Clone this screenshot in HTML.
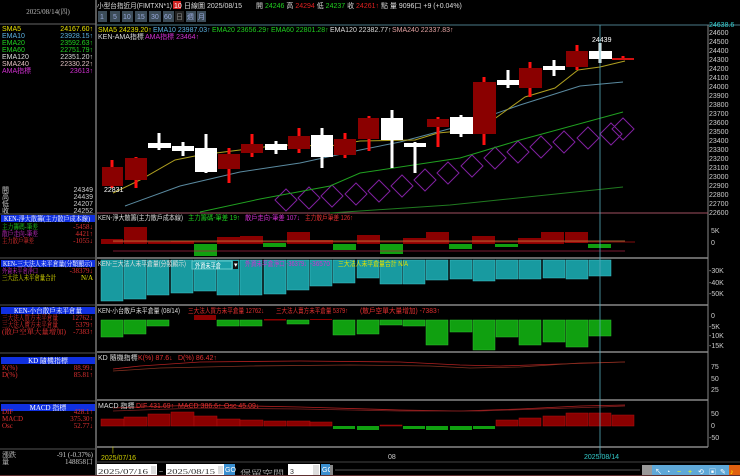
<!DOCTYPE html>
<html><head><meta charset="utf-8"><style>
html,body{margin:0;padding:0;background:#000;width:740px;height:476px;overflow:hidden}
svg{display:block}
text{font-family:"Liberation Sans","Noto Sans CJK TC",sans-serif;font-size:7px}
.s{font-family:"Liberation Serif","Noto Serif CJK SC",serif}
</style></head><body>
<svg width="740" height="476" viewBox="0 0 740 476" xmlns="http://www.w3.org/2000/svg">
<rect width="740" height="476" fill="#000"/>
<!-- left panel -->
<text x="48" y="14" fill="#bbb" text-anchor="middle" class="s" font-size="6">2025/08/14(四)</text>
<line x1="0" y1="24" x2="96" y2="24" stroke="#666"/>
<line x1="96" y1="0" x2="96" y2="476" stroke="#777" stroke-width="1.5"/>
<g class="s" font-size="6">
<text x="2" y="31" fill="#e8e000" font-size="6">SMA5</text><text x="93" y="31" fill="#e8e000" text-anchor="end" font-size="6">24167.60↑</text>
<text x="2" y="38" fill="#5ab0e0" font-size="6">EMA10</text><text x="93" y="38" fill="#5ab0e0" text-anchor="end" font-size="6">23928.15↑</text>
<text x="2" y="45" fill="#20d020" font-size="6">EMA20</text><text x="93" y="45" fill="#20d020" text-anchor="end" font-size="6">23592.63↑</text>
<text x="2" y="52" fill="#20d020" font-size="6">EMA60</text><text x="93" y="52" fill="#20d020" text-anchor="end" font-size="6">22751.79↑</text>
<text x="2" y="59" fill="#ddd" font-size="6">EMA120</text><text x="93" y="59" fill="#ddd" text-anchor="end" font-size="6">22351.20↑</text>
<text x="2" y="66" fill="#e0c0c0" font-size="6">SMA240</text><text x="93" y="66" fill="#e0c0c0" text-anchor="end" font-size="6">22330.22↑</text>
<text x="2" y="73" fill="#d030d0" font-size="6">AMA指標</text><text x="93" y="73" fill="#d030d0" text-anchor="end" font-size="6">23613↑</text>
<text x="2" y="192" fill="#ccc" font-size="6">開</text><text x="93" y="192" fill="#ccc" text-anchor="end" font-size="6">24349</text>
<text x="2" y="199" fill="#ccc" font-size="6">高</text><text x="93" y="199" fill="#ccc" text-anchor="end" font-size="6">24439</text>
<text x="2" y="206" fill="#ccc" font-size="6">低</text><text x="93" y="206" fill="#ccc" text-anchor="end" font-size="6">24207</text>
<text x="2" y="213" fill="#ccc" font-size="6">收</text><text x="93" y="213" fill="#ccc" text-anchor="end" font-size="6">24252</text>
</g>
<line x1="0" y1="214" x2="96" y2="214" stroke="#555"/>
<rect x="1" y="215" width="94" height="7" fill="#1030e0"/>
<text x="4" y="221" fill="#fff" class="s" font-size="6" textLength="86" lengthAdjust="spacingAndGlyphs">KEN-淨大散籌(主力散戶成本線)</text>
<text x="2" y="229" fill="#20d020" class="s" font-size="6" textLength="36" lengthAdjust="spacingAndGlyphs">主力籌碼-筆差</text><text x="93" y="229" fill="#e03030" text-anchor="end" class="s" font-size="6">-5458↓</text>
<text x="2" y="236" fill="#d030d0" class="s" font-size="6" textLength="36" lengthAdjust="spacingAndGlyphs">散戶走向-筆差</text><text x="93" y="236" fill="#e03030" text-anchor="end" class="s" font-size="6">4421↑</text>
<text x="2" y="243" fill="#e03030" class="s" font-size="6" textLength="32" lengthAdjust="spacingAndGlyphs">主力散戶筆差</text><text x="93" y="243" fill="#e03030" text-anchor="end" class="s" font-size="6">-1055↓</text>
<line x1="0" y1="258" x2="96" y2="258" stroke="#555"/>
<rect x="1" y="260" width="94" height="7" fill="#1030e0"/>
<text x="3" y="266" fill="#fff" class="s" font-size="6" textLength="89" lengthAdjust="spacingAndGlyphs">KEN-三大法人未平倉量(分類顯示)</text>
<text x="2" y="273" fill="#d030d0" class="s" font-size="6" textLength="36" lengthAdjust="spacingAndGlyphs">外資未平倉淨口</text><text x="93" y="273" fill="#e03030" text-anchor="end" class="s" font-size="6">-38379↓</text>
<text x="2" y="280" fill="#e0e000" class="s" font-size="6" textLength="54" lengthAdjust="spacingAndGlyphs">三大法人未平倉量合計</text><text x="93" y="280" fill="#e0e000" text-anchor="end" class="s" font-size="6">N/A</text>
<line x1="0" y1="305" x2="96" y2="305" stroke="#555"/>
<rect x="1" y="307" width="94" height="7" fill="#1030e0"/>
<text x="14" y="313" fill="#fff" class="s" font-size="6" textLength="68" lengthAdjust="spacingAndGlyphs">KEN-小台散戶未平倉量</text>
<text x="2" y="320" fill="#e03030" class="s" font-size="6" textLength="56" lengthAdjust="spacingAndGlyphs">三大法人買方未平倉量</text><text x="93" y="320" fill="#e03030" text-anchor="end" class="s" font-size="6">12762↓</text>
<text x="2" y="327" fill="#e03030" class="s" font-size="6" textLength="56" lengthAdjust="spacingAndGlyphs">三大法人賣方未平倉量</text><text x="93" y="327" fill="#e03030" text-anchor="end" class="s" font-size="6">5379↑</text>
<text x="2" y="334" fill="#e03030" class="s" font-size="6" textLength="64" lengthAdjust="spacingAndGlyphs">(散戶空單大量增加)</text><text x="93" y="334" fill="#e03030" text-anchor="end" class="s" font-size="6">-7383↑</text>
<line x1="0" y1="353" x2="96" y2="353" stroke="#555"/>
<rect x="1" y="357" width="94" height="7" fill="#1030e0"/>
<text x="48" y="363" fill="#fff" text-anchor="middle" class="s" font-size="6">KD 隨機指標</text>
<text x="2" y="370" fill="#e03030" class="s" font-size="6">K(%)</text><text x="93" y="370" fill="#e03030" text-anchor="end" class="s" font-size="6">88.99↓</text>
<text x="2" y="377" fill="#e03030" class="s" font-size="6">D(%)</text><text x="93" y="377" fill="#e03030" text-anchor="end" class="s" font-size="6">85.81↑</text>
<line x1="0" y1="401" x2="96" y2="401" stroke="#555"/>
<rect x="1" y="404" width="94" height="7" fill="#1030e0"/>
<text x="48" y="410" fill="#fff" text-anchor="middle" class="s" font-size="6">MACD 指標</text>
<text x="2" y="414" fill="#e03030" class="s" font-size="6">DIF</text><text x="93" y="414" fill="#e03030" text-anchor="end" class="s" font-size="6">428.1↑</text>
<text x="2" y="421" fill="#e03030" class="s" font-size="6">MACD</text><text x="93" y="421" fill="#e03030" text-anchor="end" class="s" font-size="6">375.30↑</text>
<text x="2" y="428" fill="#e03030" class="s" font-size="6">Osc</text><text x="93" y="428" fill="#e03030" text-anchor="end" class="s" font-size="6">52.77↓</text>
<line x1="0" y1="449" x2="96" y2="449" stroke="#555"/>
<text x="2" y="457" fill="#ccc" class="s" font-size="6">漲跌</text><text x="93" y="457" fill="#ccc" text-anchor="end" class="s" font-size="6">-91 (-0.37%)</text>
<text x="2" y="464" fill="#ccc" class="s" font-size="6">量</text><text x="93" y="464" fill="#ccc" text-anchor="end" class="s" font-size="6">148858口</text>

<!-- header -->
<text x="97" y="8" fill="#ddd" font-size="8" textLength="75" lengthAdjust="spacingAndGlyphs">小型台指近月(FIMTXN*1)</text>
<rect x="173" y="1" width="8" height="8" fill="#d02020"/><text x="174" y="8" fill="#fff" font-size="6">10</text>
<text x="184" y="8" fill="#ddd" font-size="8">日線圖  2025/08/15</text>
<text x="256" y="8" fill="#ddd" font-size="8">開 <tspan fill="#20d020">24246</tspan> 高 <tspan fill="#e02020">24294</tspan> 低 <tspan fill="#20d020">24237</tspan> 收 <tspan fill="#e02020">24261↑</tspan> 點 量 9096口  +9 (+0.04%)</text>
<g font-size="7">
<rect x="98" y="11" width="9" height="11" fill="#3c4c58"/><text x="100" y="19" fill="#9ad">1</text>
<rect x="110" y="11" width="10" height="11" fill="#3c4c58"/><text x="113" y="19" fill="#9ad">5</text>
<rect x="122" y="11" width="11" height="11" fill="#3c4c58"/><text x="123" y="19" fill="#9ad">10</text>
<rect x="135" y="11" width="12" height="11" fill="#3c4c58"/><text x="137" y="19" fill="#9ad">15</text>
<rect x="149" y="11" width="12" height="11" fill="#3c4c58"/><text x="151" y="19" fill="#9ad">30</text>
<rect x="163" y="11" width="11" height="11" fill="#3c4c58"/><text x="164" y="19" fill="#9ad">60</text>
<rect x="175" y="11" width="9" height="11" fill="#222"/><text x="176" y="19" fill="#888">日</text>
<rect x="186" y="11" width="10" height="11" fill="#3c4c58"/><text x="187" y="19" fill="#9ad">週</text>
<rect x="197" y="11" width="9" height="11" fill="#3c4c58"/><text x="198" y="19" fill="#9ad">月</text>
</g>
<line x1="97" y1="25" x2="740" y2="25" stroke="#4a7a88"/>
<text x="98" y="32" fill="#e0e000">SMA5 24239.20↑</text>
<text x="153" y="32" fill="#5ab0e0">EMA10 23987.03↑</text>
<text x="212" y="32" fill="#20d020">EMA20 23656.29↑</text>
<text x="271" y="32" fill="#20d020">EMA60 22801.28↑</text>
<text x="330" y="32" fill="#ddd">EMA120 22382.77↑</text>
<text x="392" y="32" fill="#e0a0a0">SMA240 22337.83↑</text>
<text x="98" y="39" fill="#ddd">KEN-AMA指標</text>
<text x="145" y="39" fill="#d030d0">AMA指標 23464↑</text>

<!-- right axis -->
<line x1="708" y1="25" x2="708" y2="447" stroke="#888"/>
<g fill="#ccc" font-size="6">
<text x="709" y="27" fill="#3cc">24638.6</text>
<text x="709" y="35">24600</text><text x="709" y="44">24500</text><text x="709" y="53">24400</text><text x="709" y="62">24300</text><text x="709" y="71">24200</text><text x="709" y="80">24100</text><text x="709" y="89">24000</text><text x="709" y="98">23900</text><text x="709" y="107">23800</text><text x="709" y="116">23700</text><text x="709" y="125">23600</text><text x="709" y="134">23500</text><text x="709" y="143">23400</text><text x="709" y="152">23300</text><text x="709" y="161">23200</text><text x="709" y="170">23100</text><text x="709" y="179">23000</text><text x="709" y="188">22900</text><text x="709" y="197">22800</text><text x="709" y="206">22700</text><text x="709" y="215">22600</text>
<text x="711" y="233">5K</text><text x="711" y="245">0</text>
<text x="709" y="273">-30K</text><text x="709" y="285">-40K</text><text x="709" y="296">-50K</text>
<text x="711" y="318">0</text><text x="709" y="329">-5K</text><text x="709" y="338">-10K</text><text x="709" y="348">-15K</text>
<text x="711" y="369">75</text><text x="711" y="381">50</text><text x="711" y="392">25</text>
<text x="711" y="416">50</text><text x="711" y="428">0</text><text x="709" y="440">-50</text>
</g>
<!-- panel separators -->
<g stroke="#888" stroke-width="1.5">
<line x1="97" y1="213" x2="708" y2="213" stroke="#a05060" stroke-width="1"/>
<line x1="97" y1="258" x2="708" y2="258"/>
<line x1="97" y1="305" x2="708" y2="305"/>
<line x1="97" y1="352" x2="708" y2="352"/>
<line x1="97" y1="400" x2="708" y2="400"/>
<line x1="97" y1="447" x2="708" y2="447"/>
</g>

<!-- diamonds -->
<g fill="none" stroke="#8020a0" stroke-width="1">
<path d="M275 200 l11 -11 l11 11 l-11 11z M298 198 l11 -11 l11 11 l-11 11z M321 196 l11 -11 l11 11 l-11 11z M345 194 l11 -11 l11 11 l-11 11z M368 191 l11 -11 l11 11 l-11 11z M391 186 l11 -11 l11 11 l-11 11z M414 180 l11 -11 l11 11 l-11 11z M437 173 l11 -11 l11 11 l-11 11z M461 166 l11 -11 l11 11 l-11 11z M484 158 l11 -11 l11 11 l-11 11z M507 152 l11 -11 l11 11 l-11 11z M530 147 l11 -11 l11 11 l-11 11z M553 142 l11 -11 l11 11 l-11 11z M577 138 l11 -11 l11 11 l-11 11z M600 134 l11 -11 l11 11 l-11 11z M612 129 l11 -11 l11 11 l-11 11z"/>
</g>
<!-- MA lines -->
<polyline fill="none" stroke="#207a20" points="330,213 450,205 623,187"/>
<polyline fill="none" stroke="#20a020" points="200,212 260,199 330,186 360,173 460,158 520,140 623,112"/>
<polyline fill="none" stroke="#5a8aa0" points="125,206 180,186 240,172 300,163 360,150 400,142 460,126 520,105 580,86 623,82"/>
<polyline fill="none" stroke="#b0a020" points="113,193 140,180 175,160 200,155 240,150 280,145 330,146 360,141 415,140 438,133 470,130 490,122 525,97 555,88 578,70 600,67 625,61"/>

<!-- candles -->
<g stroke="#ff1010" stroke-width="3">
<line x1="112" y1="160" x2="112" y2="188"/><line x1="136" y1="157" x2="136" y2="188"/>
<line x1="229" y1="148" x2="229" y2="183"/><line x1="252" y1="134" x2="252" y2="157"/>
<line x1="299" y1="128" x2="299" y2="153"/><line x1="345" y1="133" x2="345" y2="158"/>
<line x1="369" y1="116" x2="369" y2="151"/><line x1="438" y1="117" x2="438" y2="147"/>
<line x1="484" y1="77" x2="484" y2="145"/><line x1="530" y1="62" x2="530" y2="97"/>
<line x1="577" y1="45" x2="577" y2="70"/><line x1="623" y1="56" x2="623" y2="60"/>
</g>
<g fill="#8a0000">
<rect x="102" y="167" width="21" height="19"/><rect x="125" y="158" width="22" height="22"/>
<rect x="218" y="154" width="22" height="15"/><rect x="241" y="144" width="22" height="9"/>
<rect x="288" y="136" width="22" height="13"/><rect x="334" y="139" width="22" height="16"/>
<rect x="358" y="118" width="21" height="21"/><rect x="427" y="119" width="22" height="8"/>
<rect x="473" y="82" width="23" height="52"/><rect x="519" y="68" width="23" height="20"/>
<rect x="566" y="51" width="22" height="16"/><rect x="612" y="58" width="22" height="2" fill="#d01010"/>
</g>
<g stroke="#fff" stroke-width="3">
<line x1="159" y1="133" x2="159" y2="150"/><line x1="183" y1="142" x2="183" y2="156"/>
<line x1="206" y1="134" x2="206" y2="173"/><line x1="276" y1="141" x2="276" y2="154"/>
<line x1="322" y1="128" x2="322" y2="168"/><line x1="392" y1="110" x2="392" y2="168"/>
<line x1="415" y1="142" x2="415" y2="173"/><line x1="461" y1="115" x2="461" y2="137"/>
<line x1="508" y1="70" x2="508" y2="88"/><line x1="554" y1="60" x2="554" y2="76"/>
<line x1="600" y1="43" x2="600" y2="63"/>
</g>
<g fill="#fff">
<rect x="148" y="143" width="23" height="5"/><rect x="172" y="146" width="22" height="5"/>
<rect x="195" y="148" width="22" height="24"/><rect x="265" y="144" width="22" height="6"/>
<rect x="311" y="135" width="22" height="22"/><rect x="381" y="118" width="22" height="22"/>
<rect x="404" y="143" width="22" height="4"/><rect x="450" y="117" width="23" height="17"/>
<rect x="497" y="80" width="22" height="5"/><rect x="543" y="66" width="22" height="4"/>
<rect x="589" y="51" width="23" height="8"/>
</g>
<text x="104" y="192" fill="#fff" font-size="7">22831</text>
<text x="592" y="42" fill="#fff" font-size="7">24439</text>

<!-- panel 2 -->
<g fill="#8a0000">
<rect x="101" y="239" width="22" height="5"/><rect x="124" y="227" width="23" height="17"/>
<rect x="148" y="242" width="23" height="2"/><rect x="171" y="241" width="23" height="3"/>
<rect x="217" y="237" width="23" height="7"/><rect x="240" y="236" width="23" height="8"/>
<rect x="287" y="232" width="23" height="12"/><rect x="310" y="240" width="23" height="4"/>
<rect x="357" y="235" width="23" height="9"/><rect x="403" y="238" width="23" height="6"/>
<rect x="426" y="232" width="23" height="12"/><rect x="472" y="236" width="23" height="8"/>
<rect x="518" y="238" width="23" height="6"/><rect x="541" y="232" width="23" height="12"/>
<rect x="565" y="232" width="23" height="11"/>
</g>
<g fill="#10a010">
<rect x="194" y="244" width="23" height="12"/><rect x="263" y="243" width="23" height="4"/>
<rect x="333" y="244" width="23" height="6"/><rect x="380" y="244" width="23" height="10"/>
<rect x="449" y="244" width="23" height="5"/><rect x="495" y="244" width="23" height="3"/>
<rect x="588" y="244" width="23" height="4"/>
</g>
<line x1="113" y1="241" x2="625" y2="241" stroke="#c08040" stroke-width="0.7"/>
<line x1="113" y1="242" x2="635" y2="242" stroke="#b01010" stroke-width="0.8"/>
<line x1="113" y1="251" x2="625" y2="251" stroke="#a02040" stroke-width="0.8"/>
<text x="98" y="220" fill="#ddd" textLength="85" lengthAdjust="spacingAndGlyphs">KEN-淨大散籌(主力散戶成本線)</text>
<text x="188" y="220" fill="#20d020" textLength="52" lengthAdjust="spacingAndGlyphs">主力籌碼-筆差 19↑</text>
<text x="245" y="220" fill="#d030d0" textLength="55" lengthAdjust="spacingAndGlyphs">散戶走向-筆差 107↓</text>
<text x="305" y="220" fill="#e03030" textLength="48" lengthAdjust="spacingAndGlyphs">主力散戶筆差 126↑</text>

<!-- panel 3 teal -->
<g fill="#189aa0" stroke="#40c0c8" stroke-width="0.5">
<rect x="101" y="260" width="22" height="41"/><rect x="124" y="260" width="22" height="39"/>
<rect x="147" y="260" width="22" height="35"/><rect x="171" y="260" width="22" height="33"/>
<rect x="194" y="260" width="22" height="31"/><rect x="217" y="260" width="22" height="35"/>
<rect x="240" y="260" width="22" height="35"/><rect x="264" y="260" width="22" height="34"/>
<rect x="287" y="260" width="22" height="30"/><rect x="310" y="260" width="22" height="26"/>
<rect x="333" y="260" width="22" height="23"/><rect x="357" y="260" width="22" height="18"/>
<rect x="380" y="260" width="22" height="24"/><rect x="403" y="260" width="22" height="24"/>
<rect x="426" y="260" width="22" height="20"/><rect x="450" y="260" width="22" height="19"/>
<rect x="473" y="260" width="22" height="21"/><rect x="496" y="260" width="22" height="19"/>
<rect x="519" y="260" width="22" height="19"/><rect x="543" y="260" width="22" height="18"/>
<rect x="566" y="260" width="22" height="19"/><rect x="589" y="260" width="22" height="16"/>
</g>
<text x="98" y="266" fill="#ddd" textLength="88" lengthAdjust="spacingAndGlyphs">KEN-三大法人未平倉量(分類顯示)</text>
<rect x="192" y="261" width="40" height="8" fill="#1aa0a8" stroke="#6cc"/>
<text x="195" y="268" fill="#fff" textLength="26" lengthAdjust="spacingAndGlyphs">外資未平倉</text>
<rect x="233" y="261" width="5" height="8" fill="#111"/><text x="234" y="267" fill="#fff" font-size="5">▾</text>
<text x="245" y="266" fill="#d030d0" textLength="62" lengthAdjust="spacingAndGlyphs">外資未平倉淨口 -36379↓</text>
<text x="310" y="266" fill="#d030d0" textLength="20" lengthAdjust="spacingAndGlyphs">-36570</text>
<text x="338" y="266" fill="#e0e000" textLength="70" lengthAdjust="spacingAndGlyphs">三大法人未平倉量合計 N/A</text>

<!-- panel 4 green -->
<g fill="#10a010" stroke="#30c030" stroke-width="0.5">
<rect x="101" y="320" width="22" height="17"/><rect x="124" y="320" width="22" height="14"/>
<rect x="147" y="320" width="22" height="6"/><rect x="217" y="320" width="22" height="6"/>
<rect x="240" y="320" width="22" height="6"/><rect x="287" y="320" width="22" height="4"/>
<rect x="333" y="320" width="22" height="15"/><rect x="357" y="320" width="22" height="14"/>
<rect x="380" y="320" width="22" height="5"/><rect x="403" y="320" width="22" height="6"/>
<rect x="426" y="320" width="22" height="25"/><rect x="450" y="320" width="22" height="12"/>
<rect x="473" y="320" width="22" height="30"/><rect x="496" y="320" width="22" height="17"/>
<rect x="519" y="320" width="22" height="25"/><rect x="543" y="320" width="22" height="22"/>
<rect x="566" y="320" width="22" height="27"/><rect x="589" y="320" width="22" height="16"/>
</g>
<rect x="194" y="315" width="22" height="5" fill="#8a0000"/>
<rect x="264" y="319" width="22" height="1.5" fill="#8a0000"/>
<rect x="310" y="319" width="22" height="1" fill="#8a0000"/>
<text x="98" y="313" fill="#ddd" textLength="82" lengthAdjust="spacingAndGlyphs">KEN-小台散戶未平倉量 (08/14)</text>
<text x="188" y="313" fill="#e03030" textLength="76" lengthAdjust="spacingAndGlyphs">三大法人買方未平倉量 12762↓</text>
<text x="276" y="313" fill="#e03030" textLength="72" lengthAdjust="spacingAndGlyphs">三大法人賣方未平倉量 5379↑</text>
<text x="360" y="313" fill="#e03030" textLength="80" lengthAdjust="spacingAndGlyphs">(散戶空單大量增加) -7383↑</text>

<!-- KD -->
<polyline fill="none" stroke="#b02020" stroke-width="0.8" points="113,369 140,366 200,362 300,361 400,362 460,365 500,366 560,364 625,362"/>
<polyline fill="none" stroke="#803020" stroke-width="0.8" points="113,371 160,368 250,366 350,365 430,366 470,368 520,367 580,363 625,362"/>
<text x="98" y="360" fill="#ddd">KD 隨機指標</text>
<text x="138" y="360" fill="#e03030">K(%) 87.6↓</text>
<text x="178" y="360" fill="#e03030">D(%) 86.42↑</text>

<!-- MACD -->
<g fill="#8a0000" stroke="#b01010" stroke-width="0.5">
<rect x="101" y="419" width="23" height="7"/><rect x="124" y="417" width="23" height="9"/>
<rect x="148" y="414" width="22" height="12"/><rect x="171" y="412" width="23" height="14"/>
<rect x="194" y="416" width="23" height="10"/><rect x="217" y="419" width="23" height="7"/>
<rect x="240" y="420" width="23" height="6"/><rect x="264" y="421" width="22" height="5"/>
<rect x="287" y="421" width="23" height="5"/><rect x="310" y="422" width="22" height="4"/>
<rect x="380" y="425" width="22" height="1"/><rect x="496" y="420" width="22" height="6"/>
<rect x="519" y="418" width="22" height="8"/><rect x="543" y="416" width="22" height="10"/>
<rect x="566" y="413" width="22" height="13"/><rect x="589" y="413" width="22" height="13"/>
<rect x="612" y="415" width="22" height="11"/>
</g>
<g fill="#10a010">
<rect x="333" y="426" width="22" height="3"/><rect x="357" y="426" width="22" height="4"/>
<rect x="403" y="426" width="22" height="3"/><rect x="426" y="426" width="22" height="4"/>
<rect x="450" y="426" width="22" height="4"/><rect x="473" y="426" width="22" height="3"/>
</g>
<polyline fill="none" stroke="#b02020" stroke-width="0.8" points="113,408 200,405 300,407 400,410 460,411 520,409 580,406 625,405"/>
<polyline fill="none" stroke="#802020" stroke-width="0.8" points="113,411 200,408 300,409 400,411 480,411 540,409 600,407 625,406"/>
<text x="98" y="408" fill="#ddd">MACD 指標</text>
<text x="136" y="408" fill="#e03030">DIF 431.69↑</text>
<text x="178" y="408" fill="#e03030">MACD 386.6↑</text>
<text x="224" y="408" fill="#e03030">Osc 45.09↓</text>

<!-- crosshair -->
<line x1="600" y1="25" x2="600" y2="455" stroke="#5ab" stroke-width="0.8"/>
<!-- date axis -->
<text x="101" y="460" fill="#cc0" font-size="6">2025/07/16</text>
<text x="112" y="452" fill="#cc0" font-size="5">|</text>
<text x="388" y="459" fill="#ccc" font-size="6">08</text>
<text x="584" y="459" fill="#3cc" font-size="6">2025/08/14</text>
<line x1="97" y1="462" x2="740" y2="462" stroke="#444"/>

<!-- bottom toolbar -->
<rect x="97" y="464" width="60" height="12" fill="#fff"/>
<text x="98" y="474" fill="#333" font-size="10" class="s" textLength="50" lengthAdjust="spacingAndGlyphs">2025/07/16</text>
<rect x="151" y="466" width="5" height="8" fill="#ddd"/>
<text x="159" y="474" fill="#ccc" font-size="9">~</text>
<rect x="166" y="464" width="58" height="12" fill="#fff"/>
<text x="167" y="474" fill="#333" font-size="10" class="s" textLength="48" lengthAdjust="spacingAndGlyphs">2025/08/15</text>
<rect x="218" y="466" width="5" height="8" fill="#ddd"/>
<rect x="224" y="464" width="11" height="11" fill="#3a8fd0"/><text x="225" y="472" fill="#fff" font-size="5">GO</text>
<text x="240" y="475" fill="#999" font-size="12" textLength="44" lengthAdjust="spacingAndGlyphs">保留空間</text>
<rect x="288" y="464" width="32" height="12" fill="#fff"/>
<text x="290" y="474" fill="#333" font-size="10">3</text>
<rect x="313" y="465" width="6" height="10" fill="#ddd"/>
<rect x="321" y="464" width="9" height="11" fill="#3a8fd0"/><text x="322" y="472" fill="#fff" font-size="5">GO</text>
<rect x="330" y="465" width="3" height="10" fill="#888"/>
<line x1="335" y1="470" x2="640" y2="470" stroke="#555"/>
<rect x="642" y="465" width="98" height="11" fill="#5fa8d8"/>
<rect x="642" y="465" width="10" height="11" fill="#999"/>
<g fill="#fff" font-size="8">
<text x="655" y="474">↖</text><text x="666" y="474">◔</text><text x="677" y="474" fill="#ff0">−</text><text x="688" y="474" fill="#ff0">+</text><text x="698" y="474">⟲</text><text x="709" y="474">▣</text><text x="720" y="474">✎</text>
</g>
<rect x="729" y="465" width="11" height="11" fill="#e06010"/><text x="730" y="474" fill="#ff0" font-size="8">♪</text>
<line x1="0" y1="475.5" x2="740" y2="475.5" stroke="#603030"/>
</svg>
</body></html>
